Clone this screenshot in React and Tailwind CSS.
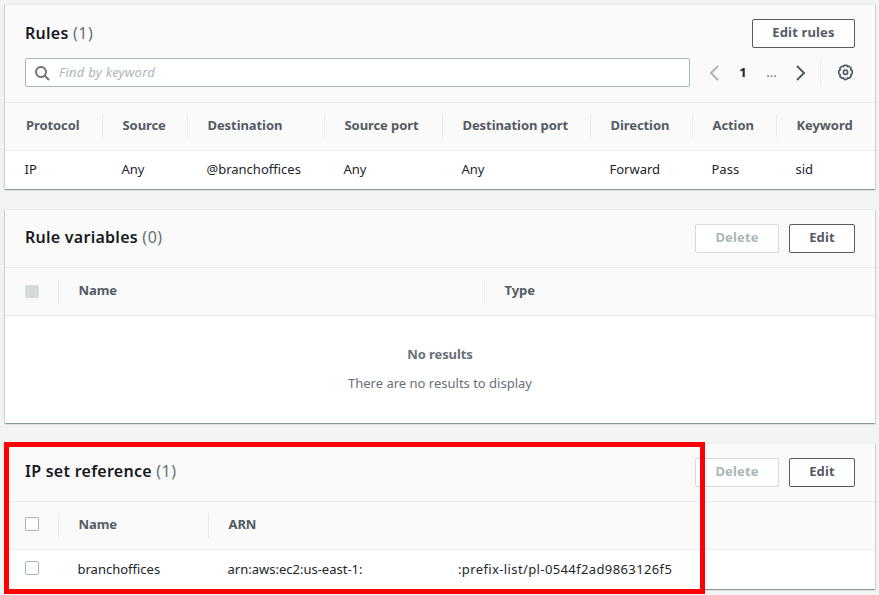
import React, { useState } from 'react';

const RULE_COLUMNS = [
  { key: 'protocol', label: 'Protocol', width: 'w-[97px]' },
  { key: 'source', label: 'Source', width: 'w-[85px]' },
  { key: 'destination', label: 'Destination', width: 'w-[137px]' },
  { key: 'sourcePort', label: 'Source port', width: 'w-[118px]' },
  { key: 'destinationPort', label: 'Destination port', width: 'w-[148px]' },
  { key: 'direction', label: 'Direction', width: 'w-[102px]' },
  { key: 'action', label: 'Action', width: 'w-[84px]' },
  { key: 'keyword', label: 'Keyword', width: 'w-[99px]' },
];

const RULES = [
  {
    protocol: 'IP',
    source: 'Any',
    destination: '@branchoffices',
    sourcePort: 'Any',
    destinationPort: 'Any',
    direction: 'Forward',
    action: 'Pass',
    keyword: 'sid',
  },
];

// Card shell shared by every section
const Panel = ({ className, children }) => (
  <section
    className={`w-[870px] shrink-0 flex flex-col bg-white border-t border-[#eaeded] shadow-[0_1px_1px_0_rgba(0,28,36,0.3),1px_1px_1px_0_rgba(0,28,36,0.1),-1px_1px_1px_0_rgba(0,28,36,0.1)] ${className}`}
  >
    {children}
  </section>
);

const Title = ({ text, count }) => (
  <h2 className="text-[16px] leading-[22px] font-semibold text-[#16191f] whitespace-nowrap tracking-[0.26px]">
    {text} <span className="font-normal text-[#687078] tracking-[0.5px]">({count})</span>
  </h2>
);

const Button = ({ children, disabled, className }) => (
  <button
    type="button"
    disabled={disabled}
    className={`h-[29px] flex items-center justify-center rounded-[2px] border bg-white text-[13px] font-bold tracking-[0.15px] whitespace-nowrap pb-px
      ${disabled ? 'border-[#d5dbdb] text-[#aab7b8]' : 'border-[#545b64] text-[#545b64]'} ${className}`}
  >
    {children}
  </button>
);

// Header cell, with a short divider on its left unless it is the first one
const HeadCell = ({ children, first, className }) => (
  <div
    className={`h-[25px] shrink-0 flex items-center whitespace-nowrap pb-px ${first ? 'pl-[21px]' : 'pl-[19.5px] border-l border-[#eaeded]'} ${className}`}
  >
    {children}
  </div>
);

const HeadRow = ({ children }) => (
  <div className="h-[48px] shrink-0 flex items-center bg-[#fafafa] border-b border-[#eaeded] text-[13px] font-bold text-[#545b64] tracking-[-0.08px]">
    {children}
  </div>
);

const Checkbox = ({ checked, onChange, disabled }) => (
  <input
    type="checkbox"
    checked={checked}
    onChange={onChange}
    disabled={disabled}
    className="appearance-none size-[14px] rounded-[2px] border border-[#aab7b8] bg-white checked:bg-[#0073bb] disabled:h-[13px] disabled:border-[#d5dbdb] disabled:bg-[#d5dbdb]"
  />
);

const SearchIcon = () => (
  <svg width="16" height="16" viewBox="0 0 16 16" fill="none" stroke="#687078" strokeWidth="2">
    <circle cx="7" cy="7" r="5" />
    <path d="M10.6 10.6L15 15" />
  </svg>
);

const Chevron = ({ color, d, className = '' }) => (
  <svg width="16" height="16" viewBox="0 0 16 16" fill="none" stroke={color} strokeWidth="2" className={`shrink-0 ${className}`}>
    <path d={d} />
  </svg>
);

const GearIcon = () => (
  <svg width="17" height="17" viewBox="0 0 16 16" fill="none" stroke="#545b64" strokeWidth="1.6" strokeLinejoin="round">
    <path d="M6.8 1.2h2.4l.7 1.2 1.6-.3 1.8 1.8-.4 1.5 1.4.9v2.9l-1.4.8.4 1.6-1.8 1.7-1.5-.3-.8 1.4H6.8l-.8-1.4-1.5.3-1.8-1.7.4-1.6-1.4-.8V6.3l1.4-.9-.4-1.5 1.8-1.8 1.6.3z" />
    <circle cx="8" cy="7.8" r="2" />
  </svg>
);

export default function App() {
  const [keyword, setKeyword] = useState('');
  const [selected, setSelected] = useState(false);
  const toggle = () => setSelected(!selected);

  return (
    <div className="relative w-[879px] h-[595px] overflow-hidden bg-[#f2f3f3] pl-[5px] pt-[4px] flex flex-col gap-[20px] font-['Noto_Sans','Open_Sans',sans-serif] text-[13px] text-[#22262b]">
      <Panel className="h-[185px]">
        <div className="h-[98px] shrink-0 bg-[#fafafa] border-b border-[#eaeded] px-[20px] pt-[14px]">
          <div className="flex justify-between">
            <div className="pt-[3px]">
              <Title text="Rules" count={1} />
            </div>
            <Button className="w-[103px]">Edit rules</Button>
          </div>
          <div className="mt-[10px] flex items-center">
            <label className="w-[665px] shrink-0 h-[29px] flex items-center gap-[9px] rounded-[2px] border border-[#aab7b8] bg-white pl-[8px]">
              <SearchIcon />
              <input
                value={keyword}
                onChange={(e) => setKeyword(e.target.value)}
                placeholder="Find by keyword"
                className="flex-1 outline-none tracking-[0.25px] placeholder:italic placeholder:text-[#aab7b8]"
              />
            </label>
            <div className="flex items-center pl-[16px]">
              <Chevron color="#aab7b8" d="M12 1L5 8l7 7" />
              <span className="w-[42px] text-center font-bold">1</span>
              <span className="w-[15px] text-center text-[#687078]">...</span>
              <Chevron color="#545b64" d="M4 1l7 7-7 7" className="ml-[14px]" />
              <span className="ml-[11px] h-[27px] border-l border-[#eaeded]" />
              <span className="ml-[16px] shrink-0">
                <GearIcon />
              </span>
            </div>
          </div>
        </div>
        <HeadRow>
          {RULE_COLUMNS.map((col, i) => (
            <HeadCell key={col.key} first={i === 0} className={col.width}>
              {col.label}
            </HeadCell>
          ))}
        </HeadRow>
        {RULES.map((rule, i) => (
          <div key={i} className="flex-1 flex items-center">
            {RULE_COLUMNS.map((col) => (
              <div key={col.key} className={`shrink-0 pl-[19.5px] ${col.width}`}>
                {rule[col.key]}
              </div>
            ))}
          </div>
        ))}
      </Panel>

      <Panel className="h-[214px]">
        <div className="h-[58px] shrink-0 flex justify-between bg-[#fafafa] border-b border-[#eaeded] px-[20px] pt-[14px]">
          <div className="pt-[2px]">
            <Title text="Rule variables" count={0} />
          </div>
          <div className="flex gap-[10px]">
            <Button disabled className="w-[84px]">Delete</Button>
            <Button className="w-[66px]">Edit</Button>
          </div>
        </div>
        <HeadRow>
          <div className="w-[53px] pl-[20px] pb-px flex items-center">
            <Checkbox checked={false} disabled />
          </div>
          <HeadCell className="w-[426px]">Name</HeadCell>
          <HeadCell className="w-[391px]">Type</HeadCell>
        </HeadRow>
        <div className="flex-1 flex flex-col items-center pt-[28px] text-[#687078]">
          <p className="leading-[20px] font-bold tracking-[-0.1px]">No results</p>
          <p className="mt-[9px] leading-[20px]">There are no results to display</p>
        </div>
      </Panel>

      <Panel className="h-[146px]">
        <div className="h-[58px] shrink-0 flex justify-between bg-[#fafafa] border-b border-[#eaeded] px-[20px] pt-[14px]">
          <div className="pt-[2px]">
            <Title text="IP set reference" count={1} />
          </div>
          <div className="flex gap-[10px]">
            <Button disabled className="w-[84px]">Delete</Button>
            <Button className="w-[66px]">Edit</Button>
          </div>
        </div>
        <HeadRow>
          <div className="w-[53px] pl-[20px] pb-[3px] flex items-center">
            <Checkbox checked={selected} onChange={toggle} />
          </div>
          <HeadCell className="w-[150px]">Name</HeadCell>
          <HeadCell className="w-[667px]">ARN</HeadCell>
        </HeadRow>
        <div className="flex-1 flex items-center">
          <div className="w-[53px] pl-[20px] pb-[3px] flex items-center">
            <Checkbox checked={selected} onChange={toggle} />
          </div>
          <div className="w-[150px] pl-[19.5px]">branchoffices</div>
          <div className="flex pl-[19.5px] whitespace-nowrap">
            <span className="w-[230.5px]">arn:aws:ec2:us-east-1:</span>
            <span className="tracking-[0.38px]">:prefix-list/pl-0544f2ad9863126f5</span>
          </div>
        </div>
      </Panel>

      {/* Highlight around the IP set reference */}
      <div className="absolute left-[4px] top-[442px] w-[701px] h-[152px] border-5 border-[#ff0000] pointer-events-none" />
    </div>
  );
}
